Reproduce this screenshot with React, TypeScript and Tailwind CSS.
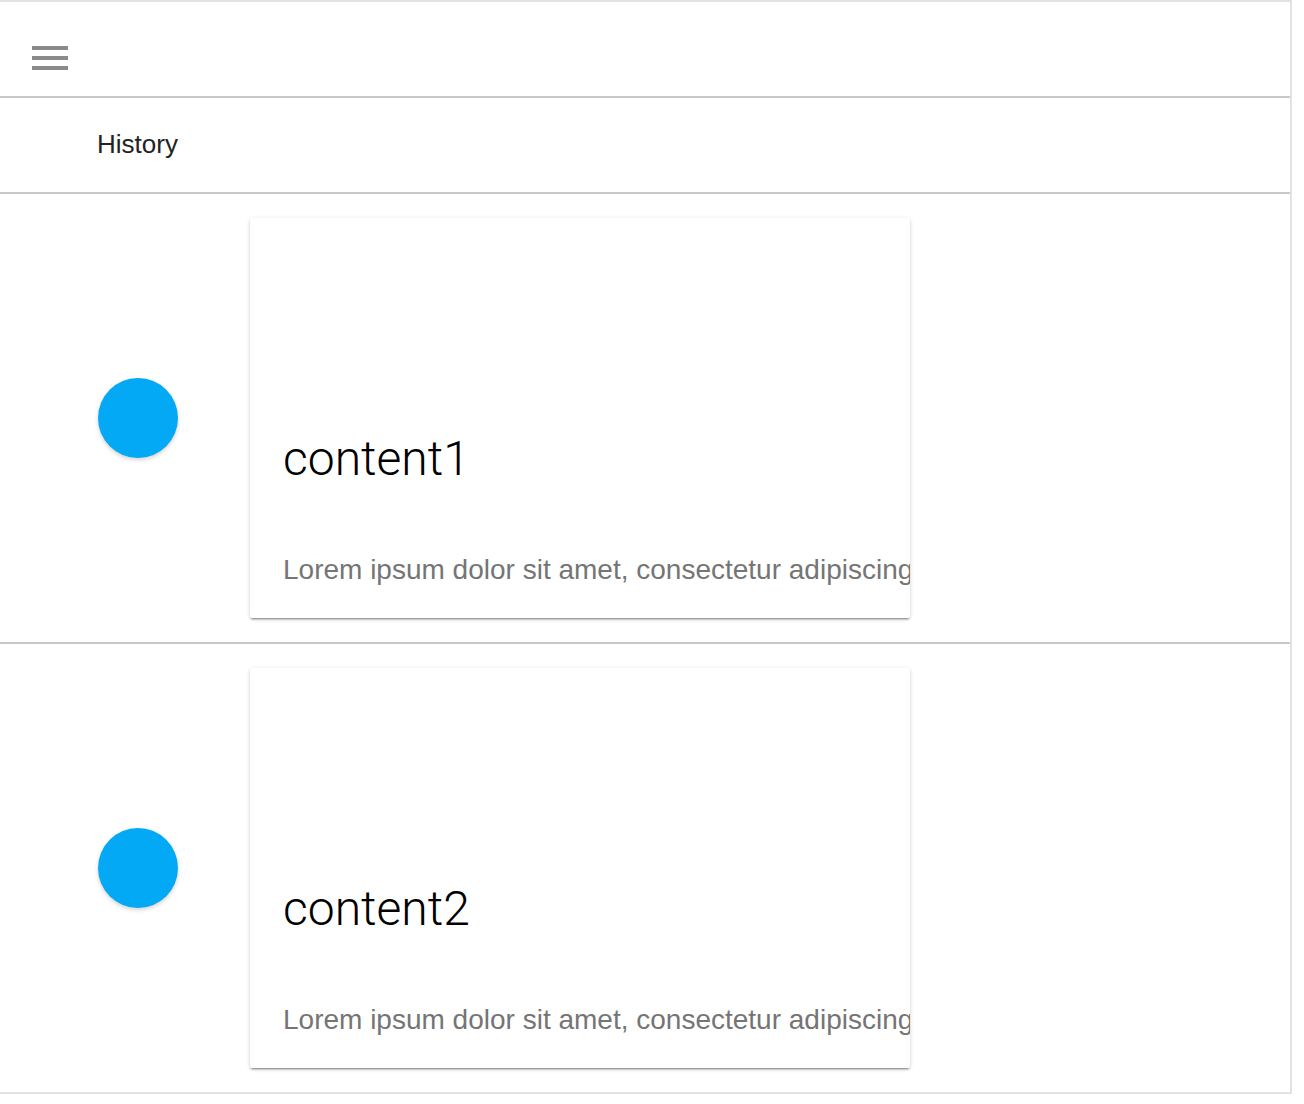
import React from "react";

function Row({ title, last }: { title: string; last?: boolean }) {
  return (
    <div className={last ? "flex h-[450px] items-center border-b-2 border-[#e2e2e2]" : "flex h-[450px] items-center border-b-2 border-[#c8c8c8]"}>
      <div className="flex w-[250px] justify-start pl-[98px]">
        <div className="h-[80px] w-[80px] rounded-full bg-[#03a9f4] shadow-[0_2px_4px_rgba(0,0,0,0.18)]" />
      </div>
      <div className="flex h-[400px] w-[660px] flex-col overflow-hidden rounded-[2px] bg-white pl-[33px] shadow-[0_2px_2px_rgba(0,0,0,0.16),0_3px_1px_-2px_rgba(0,0,0,0.22),0_1px_5px_rgba(0,0,0,0.12)]">
        <div className="mt-[213px] text-[48px] font-light leading-[56px] text-black" style={{ fontFamily: "Roboto, sans-serif" }}>
          {title}
        </div>
        <div className="mt-[67px] whitespace-nowrap text-[28px] leading-[32px] text-[#757575]" style={{ fontFamily: "'Liberation Sans', Arial, sans-serif" }}>
          Lorem ipsum dolor sit amet, consectetur adipiscing elit
        </div>
      </div>
    </div>
  );
}

export default function App() {
  return (
    <div className="h-[1104px] w-[1304px] bg-white" style={{ fontFamily: "'Liberation Sans', Arial, sans-serif" }}>
      <div className="w-[1292px] border-t-2 border-r-2 border-[#e2e2e2]">
        <div className="flex h-[96px] items-start border-b-2 border-[#c8c8c8] pl-[32px] pt-[44px]">
          <div className="flex w-[36px] flex-col gap-[6px]">
            <div className="h-[4px] bg-[#8a8a8a]" />
            <div className="h-[4px] bg-[#8a8a8a]" />
            <div className="h-[4px] bg-[#8a8a8a]" />
          </div>
        </div>
        <div className="flex h-[96px] items-center border-b-2 border-[#c8c8c8] pl-[97px]">
          <span className="-mt-[2px] text-[26px] text-[#222]">History</span>
        </div>
        <Row title="content1" />
        <Row title="content2" last />
      </div>
    </div>
  );
}
